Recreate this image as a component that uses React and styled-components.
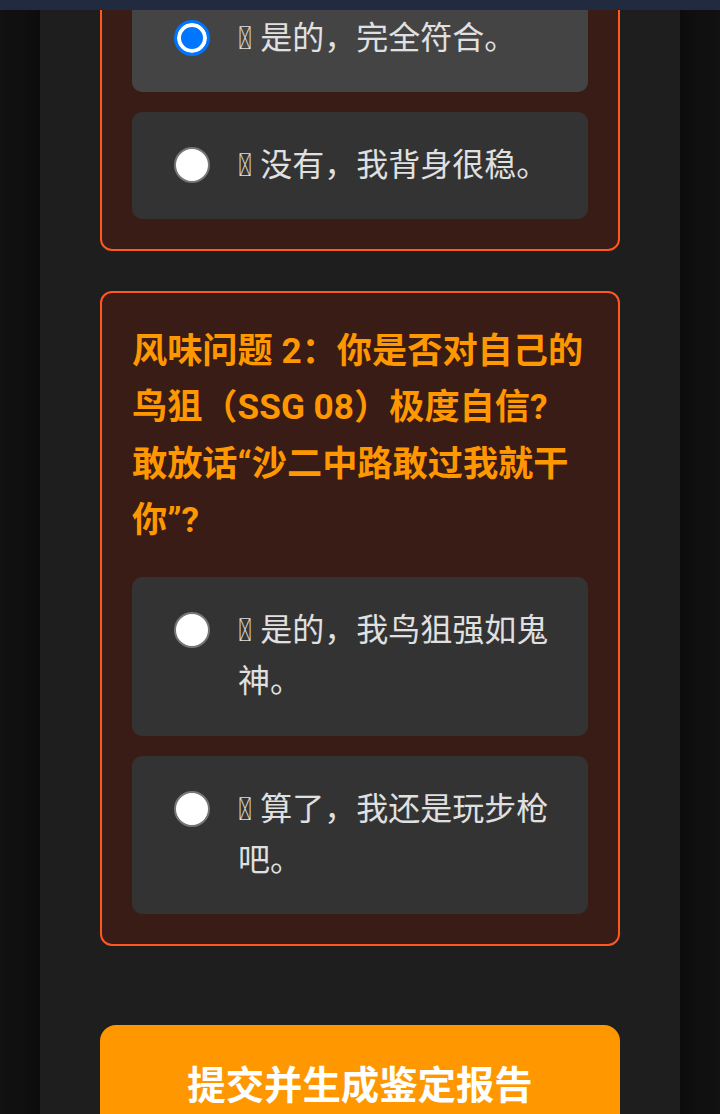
import React, { useLayoutEffect, useRef } from 'react';
import styled, { createGlobalStyle } from 'styled-components';

const GlobalStyle = createGlobalStyle`
  html, body {
    margin: 0;
    padding: 0;
    height: 100%;
    overflow: hidden;
    background: #111111;
  }
  body {
    font-family: Roboto, "Noto Sans CJK SC", sans-serif;
    font-size: 32px;
    line-height: 1.6;
    color: #e0e0e0;
  }
`;

const TopBar = styled.div`
  height: 10px;
  background: #212a3e;
`;

const Scroller = styled.div`
  height: calc(100vh - 10px);
  overflow-y: auto;
  scrollbar-width: none;
  &::-webkit-scrollbar {
    display: none;
  }
`;

const Page = styled.main`
  width: 640px;
  margin: 0 auto;
  min-height: 100%;
  background: #1e1e1e;
  box-shadow: 0 0 24px rgba(0, 0, 0, 0.6);
  padding: 40px 60px 80px;
  box-sizing: border-box;
  display: flex;
  flex-direction: column;
  gap: 40px;
`;

const Card = styled.section`
  background: #3a1c16;
  border: 2px solid #ff5722;
  border-radius: 12px;
  padding: 30px;
  display: flex;
  flex-direction: column;
`;

const Question = styled.h2`
  margin: 0 0 29px;
  color: #ff9800;
  font-size: 1.1em;
  font-weight: 700;
  line-height: 1.6;
`;

const Options = styled.div`
  display: flex;
  flex-direction: column;
  gap: 20px;
`;

const Option = styled.label`
  display: flex;
  align-items: flex-start;
  gap: 28px;
  padding: 28px 28px 28px 42px;
  border-radius: 10px;
  background: ${props => (props.checked ? '#444444' : '#333333')};
  cursor: pointer;
`;

const Radio = styled.span`
  flex: none;
  width: 36px;
  height: 36px;
  margin-top: 7px;
  border-radius: 50%;
  box-sizing: border-box;
  border: ${props => (props.checked ? '3px solid #0075ff' : '2px solid #767676')};
  background: ${props => (props.checked ? '#0075ff' : '#ffffff')};
  box-shadow: ${props => (props.checked ? 'inset 0 0 0 4px #ffffff' : 'none')};
`;

const OptionText = styled.span`
  flex: 1;
  color: #e0e0e0;
`;

const SubmitButton = styled.button`
  margin-top: 39px;
  width: 100%;
  border: none;
  border-radius: 16px;
  background: #ff9800;
  color: #ffffff;
  font-family: inherit;
  font-size: 1.2em;
  font-weight: 700;
  line-height: 1.6;
  padding: 30px 20px;
  cursor: pointer;
`;

const questions = [
  {
    title: '风味问题 1：你是否经常在对面进攻时被人从背后偷袭？',
    options: ['\u{E000} 是的，完全符合。', '\u{10FFFD} 没有，我背身很稳。'],
    checked: 0,
  },
  {
    title: '风味问题 2：你是否对自己的鸟狙（SSG 08）极度自信? 敢放话“沙二中路敢过我就干你”?',
    options: ['\u{E001} 是的，我鸟狙强如鬼神。', '\u{10FFFC} 算了，我还是玩步枪吧。'],
    checked: -1,
  },
];

const App = () => {
  const scrollerRef = useRef(null);
  const anchorRef = useRef(null);

  useLayoutEffect(() => {
    const scroller = scrollerRef.current;
    const anchor = anchorRef.current;
    if (!scroller || !anchor) return;
    const top = anchor.getBoundingClientRect().top;
    scroller.scrollTop += top + 15;
  }, []);

  return (
    <>
      <GlobalStyle />
      <TopBar />
      <Scroller ref={scrollerRef}>
        <Page>
          {questions.map((q, qi) => (
            <Card key={qi}>
              <Question>{q.title}</Question>
              <Options>
                {q.options.map((text, oi) => (
                  <Option
                    key={oi}
                    checked={q.checked === oi}
                    ref={qi === 0 && oi === 0 ? anchorRef : undefined}
                  >
                    <Radio checked={q.checked === oi} />
                    <OptionText>{text}</OptionText>
                  </Option>
                ))}
              </Options>
            </Card>
          ))}
          <SubmitButton type="button">提交并生成鉴定报告</SubmitButton>
        </Page>
      </Scroller>
    </>
  );
};

export default App;
